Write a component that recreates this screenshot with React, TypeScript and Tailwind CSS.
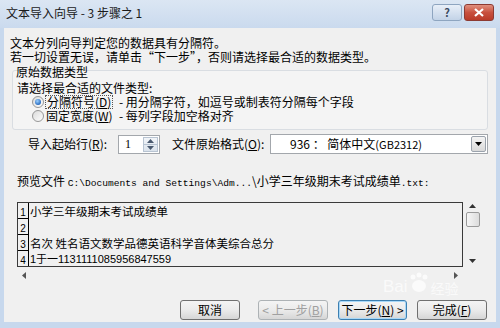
import React from "react";

const cjk = "font-['Noto_Sans_CJK_SC','Noto_Sans',sans-serif]";

function Tri({ dir, className = "" }: { dir: "up" | "down" | "left" | "right"; className?: string }) {
  const pts = {
    up: "0,4 3.5,0 7,4",
    down: "0,0 7,0 3.5,4",
    left: "4,0 4,7 0,3.5",
    right: "0,0 0,7 4,3.5",
  }[dir];
  const w = dir === "up" || dir === "down" ? 7 : 4;
  const h = dir === "up" || dir === "down" ? 4 : 7;
  return (
    <svg width={w} height={h} viewBox={`0 0 ${w} ${h}`} className={className}>
      <polygon points={pts} fill="currentColor" />
    </svg>
  );
}

function Radio({ checked }: { checked: boolean }) {
  return (
    <svg width="12" height="12" viewBox="0 0 12 12">
      <defs>
        <linearGradient id={checked ? "rg1" : "rg2"} x1="0" y1="0" x2="1" y2="1">
          <stop offset="0" stopColor="#d9d9d9" />
          <stop offset="1" stopColor="#ffffff" />
        </linearGradient>
        <radialGradient id="dot" cx="0.4" cy="0.35" r="0.7">
          <stop offset="0" stopColor="#9cd0ff" />
          <stop offset="1" stopColor="#1a5fb8" />
        </radialGradient>
      </defs>
      <circle cx="6" cy="6" r="5.5" fill={`url(#${checked ? "rg1" : "rg2"})`} stroke="#8c8c8c" strokeWidth="0.9" />
      {checked && <circle cx="6" cy="6" r="3" fill="url(#dot)" />}
    </svg>
  );
}

function Btn({
  children,
  w,
  kind = "normal",
}: {
  children: React.ReactNode;
  w: string;
  kind?: "normal" | "disabled" | "focus";
}) {
  const border =
    kind === "focus"
      ? "border-[#3c7fb1] shadow-[inset_0_0_0_1px_#a8d8f8]"
      : kind === "disabled"
        ? "border-[#adb2b5] text-[#a0a0a0]"
        : "border-[#707070]";
  return (
    <div
      className={`${w} h-[20px] rounded-[3px] border bg-gradient-to-b from-[#f4f4f4] via-[#ebebeb] to-[#d6d6d6] flex items-center justify-center text-[12px] leading-none ${border}`}
    >
      {children}
    </div>
  );
}

const rows = [
  "小学三年级期末考试成绩单",
  "",
  "名次 姓名语文数学品德英语科学音体美综合总分",
  "1于一1131111085956847559",
];

export default function App() {
  return (
    <div className={`w-[500px] h-[328px] bg-[#c7d8ed] flex flex-col text-black relative overflow-hidden ${cjk}`}>
      {/* title bar */}
      <div className="h-[28px] shrink-0 flex items-start pl-[6px] pr-[6px] bg-gradient-to-b from-[#dbe6f3] to-[#cadaee]">
        <div className="mt-[6px] text-[12px] leading-[14px] text-[#1a1a1a]">文本导入向导 - 3 步骤之 1</div>
        <div className="ml-auto mt-[4px] flex gap-[2px]">
          <div className="w-[30px] h-[17px] rounded-[3px] border border-[#8ea5c0] bg-gradient-to-b from-[#e8eff8] to-[#c3d3e7] flex items-center justify-center text-[11px] font-bold text-[#3a4a5e] leading-none">
            ?
          </div>
          <div className="w-[30px] h-[17px] rounded-[3px] border border-[#8c3a32] bg-gradient-to-b from-[#e0907f] via-[#c8503e] to-[#b93a28] flex items-center justify-center">
            <svg width="10" height="9" viewBox="0 0 10 9">
              <path d="M1 1 L9 8 M9 1 L1 8" stroke="#fff" strokeWidth="2.2" />
            </svg>
          </div>
        </div>
      </div>

      {/* body */}
      <div className="flex-1 mx-[4px] mb-[6px] bg-[#f0f0f0] flex flex-col relative">
        <div className="ml-[6px] mt-[8px] text-[12px] leading-[14px]">文本分列向导判定您的数据具有分隔符。</div>
        <div className="ml-[6px] text-[12px] leading-[14px]">若一切设置无误，请单击“下一步”，否则请选择最合适的数据类型。</div>

        {/* group */}
        <div className="mx-[8px] mt-[6px] border border-[#d9dde2] rounded-[3px] bg-[#f4f4f4] pb-[7px] text-[12px]">
          <div className="-mt-[6px] pl-[3px] leading-[14px]">原始数据类型</div>
          <div className="mt-[2px] pl-[4px] leading-[14px]">请选择最合适的文件类型:</div>
          <div className="h-[14px] flex items-center ml-[19px]">
            <Radio checked />
            <div className="ml-[1px] w-[74px] h-[14px] flex items-center">
              <span className="border border-dotted border-[#555] px-[1px] leading-[12px] whitespace-nowrap">
                分隔符号(<u>D</u>)
              </span>
            </div>
            <span className="leading-[14px] whitespace-nowrap">- 用分隔字符，如逗号或制表符分隔每个字段</span>
          </div>
          <div className="h-[13px] flex items-center ml-[19px]">
            <Radio checked={false} />
            <div className="ml-[2px] w-[73px] leading-[13px] whitespace-nowrap">
              固定宽度(<u>W</u>)
            </div>
            <span className="leading-[13px] whitespace-nowrap">- 每列字段加空格对齐</span>
          </div>
        </div>

        {/* start row + origin */}
        <div className="mt-[4px] h-[20px] flex items-center text-[12px]">
          <div className="ml-[24px] w-[90px] whitespace-nowrap">
            导入起始行(<u>R</u>):
          </div>
          <div className="w-[42px] h-[19px] border border-[#a3a7ac] bg-white flex items-center">
            <span className="ml-[6px] font-['Liberation_Serif',serif] text-[12px]">1</span>
            <div className="ml-auto mr-[1px] w-[15px] h-[15px] flex flex-col border border-[#b8c4d2] bg-gradient-to-b from-[#f2f5f9] to-[#dbe3ec]">
              <div className="h-[7px] flex items-center justify-center text-[#4a5a70] border-b border-[#b8c4d2]">
                <Tri dir="up" />
              </div>
              <div className="flex-1 flex items-center justify-center text-[#4a5a70]">
                <Tri dir="down" />
              </div>
            </div>
          </div>
          <div className="ml-[12px] w-[98px] whitespace-nowrap">
            文件原始格式(<u>O</u>):
          </div>
          <div className="w-[218px] h-[20px] border border-[#a3a7ac] bg-white flex items-center">
            <span className="ml-[19px] text-[12px] leading-none">
              936 ： 简体中文<span className="text-[11px]">(GB2312)</span>
            </span>
            <div className="ml-auto mr-[1px] w-[15px] h-[16px] border border-[#9ba3ad] rounded-[2px] bg-gradient-to-b from-[#f4f4f4] to-[#d9d9d9] flex items-center justify-center">
              <Tri dir="down" />
            </div>
          </div>
        </div>

        {/* preview label */}
        <div className="mt-[20px] ml-[13px] text-[12px] leading-[14px] whitespace-nowrap">
          预览文件 <span className="font-['Liberation_Mono',monospace] text-[9.6px]">C:\Documents and Settings\Adm...</span>
          \小学三年级期末考试成绩单<span className="font-['Liberation_Mono',monospace] text-[9.6px]">.txt:</span>
        </div>

        {/* preview */}
        <div className="mt-[11px] ml-[13px] flex">
          <div className="w-[446px] h-[65px] border border-[#3a3a3a] bg-[#f0f0f0] overflow-hidden">
            {rows.map((r, i) => (
              <div key={i} className="h-[16px] flex">
                <div className="w-[11px] shrink-0 border-r border-b border-black flex items-end justify-center text-[10px] leading-[11px] font-['Liberation_Sans',sans-serif]">
                  {i + 1}
                </div>
                <div className={`pl-[1px] h-[16px] leading-[16px] whitespace-nowrap ${i === 3 ? "text-[11px] font-['Liberation_Sans','Noto_Sans_CJK_SC',sans-serif]" : "text-[11.5px]"}`}>
                  {r}
                </div>
              </div>
            ))}
          </div>
          <div className="ml-[2px] w-[15px] h-[67px] -mt-[1px] flex flex-col items-center text-[#333]">
            <div className="h-[9px] flex items-center">
              <Tri dir="up" />
            </div>
            <div className="mt-[2px] w-[14px] h-[15px] rounded-[2px] border border-[#9a9a9a] bg-gradient-to-r from-[#f6f6f6] to-[#dcdcdc]" />
            <div className="mt-auto mb-[5px] flex items-center">
              <Tri dir="down" />
            </div>
          </div>
        </div>
        <div className="ml-[13px] w-[446px] h-[14px] flex items-center text-[#555]">
          <Tri dir="left" className="ml-[5px]" />
          <Tri dir="right" className="ml-auto mr-[5px]" />
        </div>

        {/* buttons */}
        <div className="mt-auto mb-[2px] mr-[9px] flex justify-end">
          <Btn w="w-[60px]">取消</Btn>
          <div className="ml-[18px]">
            <Btn w="w-[70px]" kind="disabled">
              &lt; 上一步(<u>B</u>)
            </Btn>
          </div>
          <div className="ml-[10px]">
            <Btn w="w-[69px]" kind="focus">
              下一步(<u>N</u>) &gt;
            </Btn>
          </div>
          <div className="ml-[10px]">
            <Btn w="w-[70px]">
              完成(<u>F</u>)
            </Btn>
          </div>
        </div>

        {/* watermark */}
        <div className="absolute left-[379px] top-[244px] flex items-end text-white/70 pointer-events-none">
          <span className="font-['Liberation_Sans',sans-serif] text-[17px] leading-none">Bai</span>
          <svg width="22" height="22" viewBox="0 0 22 22" className="mb-[1px]">
            <g fill="rgba(255,255,255,0.7)">
              <circle cx="5" cy="5" r="2.5" />
              <circle cx="11" cy="3" r="2.5" />
              <circle cx="17" cy="5" r="2.5" />
              <ellipse cx="11" cy="14" rx="7" ry="6" />
            </g>
          </svg>
          <span className="text-[14px] leading-none ml-[1px]">经验</span>
        </div>
      </div>
    </div>
  );
}
